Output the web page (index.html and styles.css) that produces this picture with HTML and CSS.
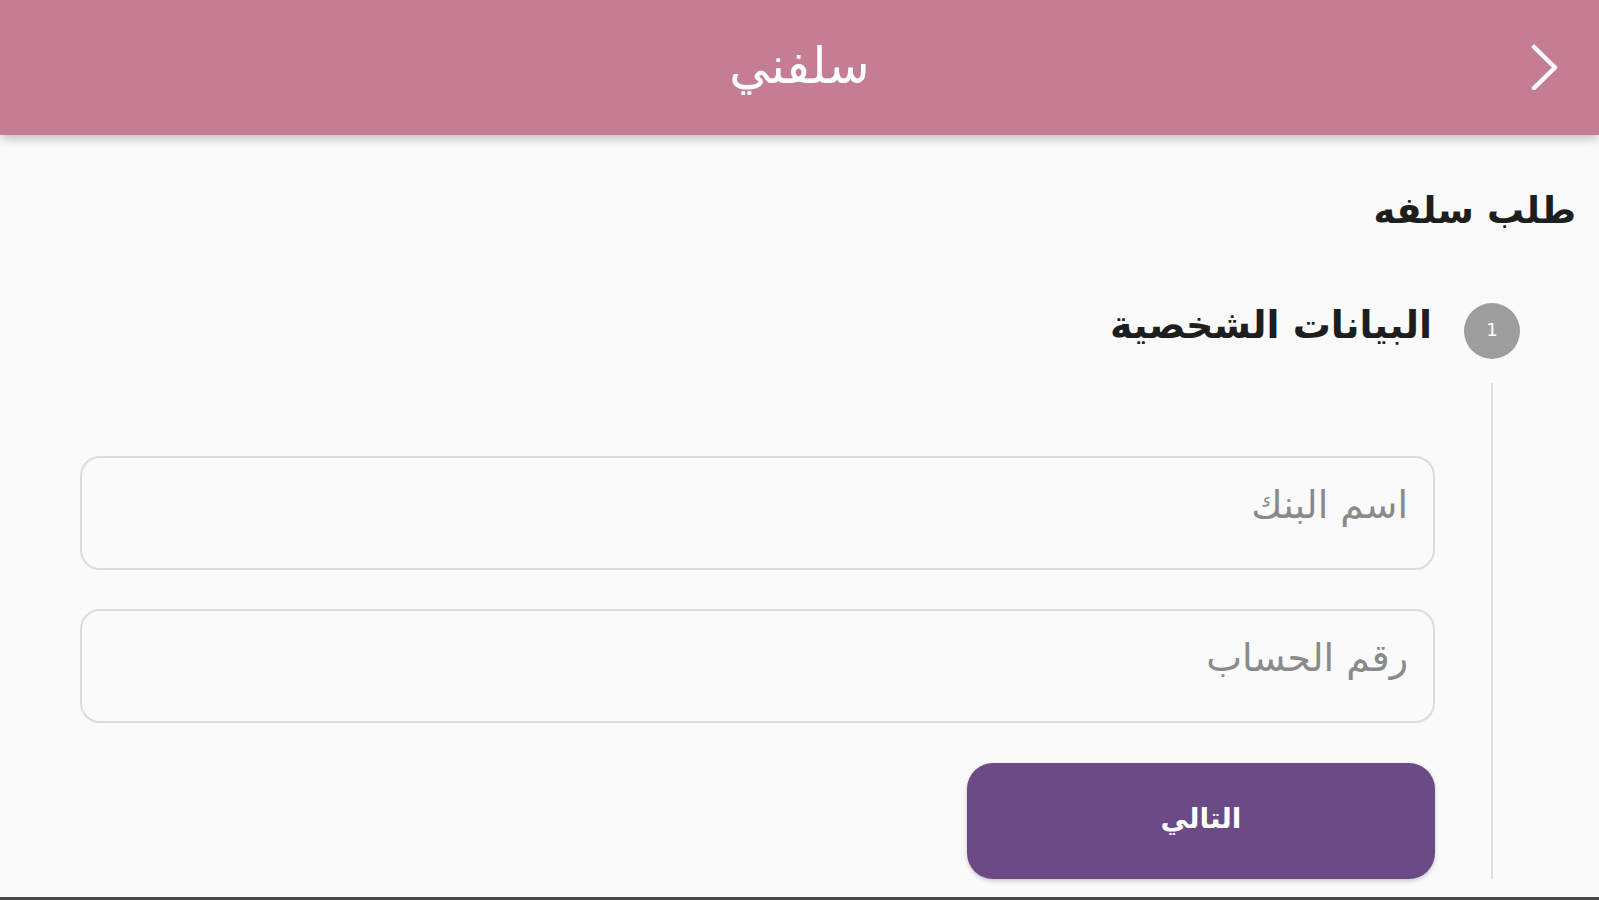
FILE: index.html
```html
<!DOCTYPE html>
<html lang="ar" dir="rtl">
<head>
<meta charset="utf-8">
<title>سلفني</title>
<link rel="stylesheet" href="styles.css">
</head>
<body>
<div class="app">
  <header class="topbar">
    <div class="back">
      <svg width="30" height="46" viewBox="0 0 30 46" fill="none"><path d="M4 3 L25 23.5 L4 44" stroke="#ffffff" stroke-width="4.5" stroke-linecap="round" stroke-linejoin="round"/></svg>
    </div>
    <h1 class="title">سلفني</h1>
    <div class="spacer"></div>
  </header>
  <main class="content">
    <h2 class="page-heading">طلب سلفه</h2>
    <section class="stepper">
      <div class="step-head">
        <div class="step-num">1</div>
        <div class="step-title">البيانات الشخصية</div>
      </div>
      <div class="step-body">
        <div class="field"><input class="input" type="text" placeholder="اسم البنك"></div>
        <div class="field"><input class="input" type="text" placeholder="رقم الحساب"></div>
        <button class="next-btn" type="button">التالي</button>
      </div>
    </section>
  </main>
  <div class="bottom-bar"></div>
</div>
</body>
</html>
```

FILE: styles.css
```css
* { box-sizing: border-box; }
html, body { margin: 0; padding: 0; }
body {
  background: #fafafa;
  font-family: "DejaVu Sans", "Noto Sans", sans-serif;
  color: #222;
}
.app {
  height: 900px;
  display: flex;
  flex-direction: column;
  overflow: hidden;
}
.topbar {
  height: 135px;
  flex: none;
  background: #c47d92;
  display: grid;
  grid-template-columns: 108px 1fr 108px;
  align-items: center;
  box-shadow: 0 4px 10px rgba(0,0,0,0.22);
  position: relative;
  z-index: 2;
}
.back {
  display: flex;
  justify-content: center;
  align-items: center;
  padding-bottom: 2px;
}
.title {
  margin: 0;
  text-align: center;
  color: #ffffff;
  font-size: 50px;
  font-weight: normal;
  line-height: 60px;
  padding-bottom: 4px;
}
.content {
  flex: 1;
  padding: 52px 23px 0 0;
}
.page-heading {
  margin: 0;
  font-size: 37px;
  font-weight: bold;
  color: #1e1e1e;
  line-height: 48px;
}
.stepper {
  margin-top: 66px;
}
.step-head {
  display: flex;
  align-items: center;
  gap: 32px;
  padding-right: 56px;
}
.step-num {
  width: 56px;
  height: 56px;
  border-radius: 50%;
  background: #9e9e9e;
  color: #ffffff;
  font-size: 18px;
  display: flex;
  align-items: center;
  justify-content: center;
  flex: none;
  padding-bottom: 4px;
}
.step-title {
  font-size: 38px;
  font-weight: bold;
  color: #1e1e1e;
  line-height: 48px;
  padding-bottom: 12px;
}
.step-body {
  margin-right: 83px;
  margin-top: 22px;
  border-right: 2px solid #dedede;
  padding: 73px 56px 0 0;
  height: 496px;
  display: flex;
  flex-direction: column;
  gap: 39px;
}
.field { width: 1355px; }
.input {
  display: block;
  width: 100%;
  height: 114px;
  border: 2px solid #dcdcdc;
  border-radius: 20px;
  background: #fafafa;
  padding: 0 25px 16px 25px;
  font-family: "DejaVu Sans", sans-serif;
  font-size: 38px;
  color: #333;
  outline: none;
}
.input::placeholder { color: #8a8a8a; }
.next-btn {
  width: 468px;
  height: 118px;
  margin-top: 1px;
  border: none;
  border-radius: 26px;
  background: #6b4a85;
  color: #ffffff;
  font-family: "DejaVu Sans", sans-serif;
  font-size: 28px;
  font-weight: bold;
  box-shadow: 0 2px 4px rgba(0,0,0,0.2);
  padding-bottom: 6px;
}
.bottom-bar {
  height: 3px;
  flex: none;
  background: #4a4a4a;
}
```
